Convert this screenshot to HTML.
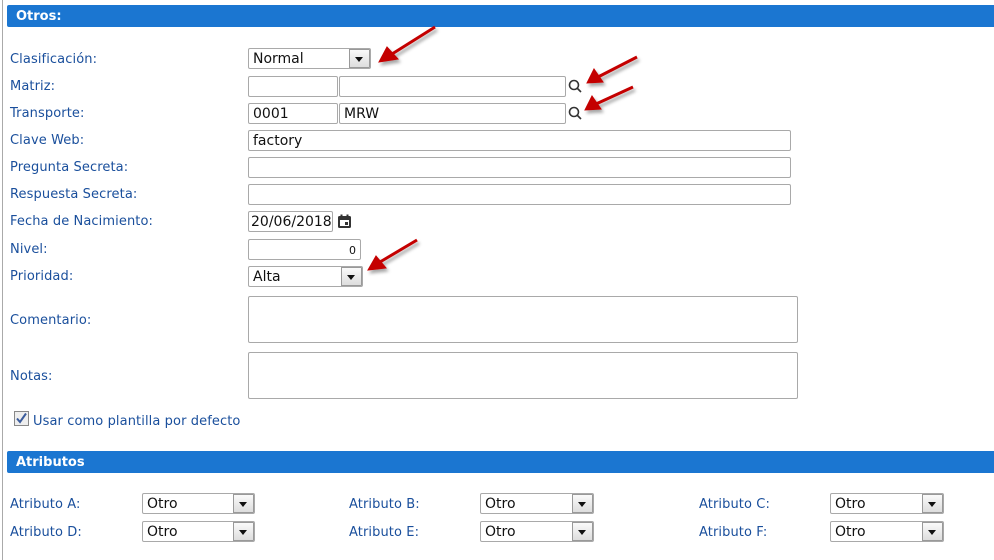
<!DOCTYPE html>
<html><head><meta charset="utf-8"><style>
body{margin:0;width:994px;height:560px;background:#fff;position:relative;overflow:hidden;font-family:"DejaVu Sans","Liberation Sans",sans-serif}
.a{position:absolute}
.bar{position:absolute;left:7px;width:987px;height:22px;background:#1b76d1;color:#fff;font-weight:bold;font-size:13px;line-height:24px;text-indent:9px;border-radius:2px 0 0 2px}
.lb{position:absolute;left:10px;color:#1a4f9c;font-size:13px;line-height:16px;letter-spacing:0.1px}
.in{position:absolute;height:19px;border:1px solid #a9a9a9;border-radius:2px;background:#fff;font-size:14px;line-height:21px;padding-left:4px;box-sizing:content-box;color:#111;overflow:hidden;white-space:nowrap}
.sel .btn{position:absolute;right:0px;top:0px;width:21px;height:19px;background:linear-gradient(#fafafa,#ddd);border:1px solid #999;box-sizing:border-box}
.sel .btn:after{content:"";position:absolute;left:5px;top:7px;border-left:4.5px solid transparent;border-right:4.5px solid transparent;border-top:5px solid #111}
</style></head><body>
<div class="a" style="left:2px;top:0;width:1px;height:560px;background:#aaa"></div>
<div class="bar" style="top:5px">Otros:</div>

<div class="lb" style="top:52px">Clasificación:</div>
<div class="in sel" style="left:248px;top:48px;width:117px">Normal<div class="btn"></div></div>
<div class="lb" style="top:79px">Matriz:</div>
<div class="in" style="left:248px;top:76px;width:84px"></div>
<div class="in" style="left:339px;top:76px;width:221px"></div>
<div class="lb" style="top:106px">Transporte:</div>
<div class="in" style="left:248px;top:103px;width:84px">0001</div>
<div class="in" style="left:339px;top:103px;width:221px">MRW</div>
<div class="lb" style="top:133px">Clave Web:</div>
<div class="in" style="left:248px;top:130px;width:537px">factory</div>
<div class="lb" style="top:160px">Pregunta Secreta:</div>
<div class="in" style="left:248px;top:157px;width:537px"></div>
<div class="lb" style="top:187px">Respuesta Secreta:</div>
<div class="in" style="left:248px;top:184px;width:537px"></div>
<div class="lb" style="top:214px">Fecha de Nacimiento:</div>
<div class="in" style="left:248px;top:211px;padding-left:2px;width:81px">20/06/2018</div>
<svg class="a" style="left:337px;top:214px" width="15" height="15" viewBox="0 0 15 15"><rect x="1" y="2" width="13" height="12" rx="1.5" fill="#333"/><rect x="3" y="6" width="9" height="6" fill="#fff"/><rect x="3.5" y="0.5" width="2" height="3" fill="#333"/><rect x="9.5" y="0.5" width="2" height="3" fill="#333"/><rect x="8" y="8" width="3" height="3" fill="#333"/></svg>
<div class="lb" style="top:242px">Nivel:</div>
<div class="in" style="left:248px;top:239px;width:107px;text-align:right;padding-left:0;padding-right:4px;font-size:11px">0</div>
<div class="lb" style="top:269px">Prioridad:</div>
<div class="in sel" style="left:248px;top:266px;width:109px">Alta<div class="btn"></div></div>
<div class="lb" style="top:313px">Comentario:</div>
<div class="in" style="left:248px;top:296px;width:544px;height:45px"></div>
<div class="lb" style="top:369px">Notas:</div>
<div class="in" style="left:248px;top:352px;width:544px;height:45px"></div>

<svg class="a" style="left:14px;top:411px" width="15" height="15"><rect x="0.5" y="0.5" width="14" height="14" fill="#eee" stroke="#888"/><path d="M3 7.5 L6 11 L12 2.5" fill="none" stroke="#3b5c9c" stroke-width="2"/></svg>
<div class="lb" style="left:33px;top:414px">Usar como plantilla por defecto</div>

<div class="bar" style="top:451px">Atributos</div>
<div class="lb" style="top:497px">Atributo A:</div>
<div class="lb" style="top:525px">Atributo D:</div>
<div class="lb" style="left:349px;top:497px">Atributo B:</div>
<div class="lb" style="left:349px;top:525px">Atributo E:</div>
<div class="lb" style="left:699px;top:497px">Atributo C:</div>
<div class="lb" style="left:699px;top:525px">Atributo F:</div>
<div class="in sel" style="left:142px;top:493px;width:107px">Otro<div class="btn"></div></div>
<div class="in sel" style="left:142px;top:521px;width:107px">Otro<div class="btn"></div></div>
<div class="in sel" style="left:480px;top:493px;width:108px">Otro<div class="btn"></div></div>
<div class="in sel" style="left:480px;top:521px;width:108px">Otro<div class="btn"></div></div>
<div class="in sel" style="left:830px;top:493px;width:108px">Otro<div class="btn"></div></div>
<div class="in sel" style="left:830px;top:521px;width:108px">Otro<div class="btn"></div></div>

<svg class="a" style="left:566px;top:76px" width="20" height="50"><g fill="none" stroke="#333" stroke-width="1.6"><circle cx="8" cy="9" r="4.5"/><path d="M11 12 L15 16"/><circle cx="8" cy="36" r="4.5"/><path d="M11 39 L15 43"/></g></svg>

<svg class="a" style="left:0;top:0" width="994" height="560">
<defs><filter id="s"><feDropShadow dx="2" dy="3" stdDeviation="1.5" flood-color="#000" flood-opacity="0.35"/></filter></defs>
<g fill="#c40000" stroke="#c40000" filter="url(#s)">
<path d="M435 27 L392 54" stroke-width="3"/><path d="M379 62 L387 47 L398 59Z"/>
<path d="M637 57 L598 77" stroke-width="3"/><path d="M587 83 L594 69 L603 82Z"/>
<path d="M633 87 L596 104" stroke-width="3"/><path d="M585 110 L592 96 L601 109Z"/>
<path d="M417 240 L380 262" stroke-width="3"/><path d="M368 270 L376 256 L386 268Z"/>
</g></svg>
</body></html>
